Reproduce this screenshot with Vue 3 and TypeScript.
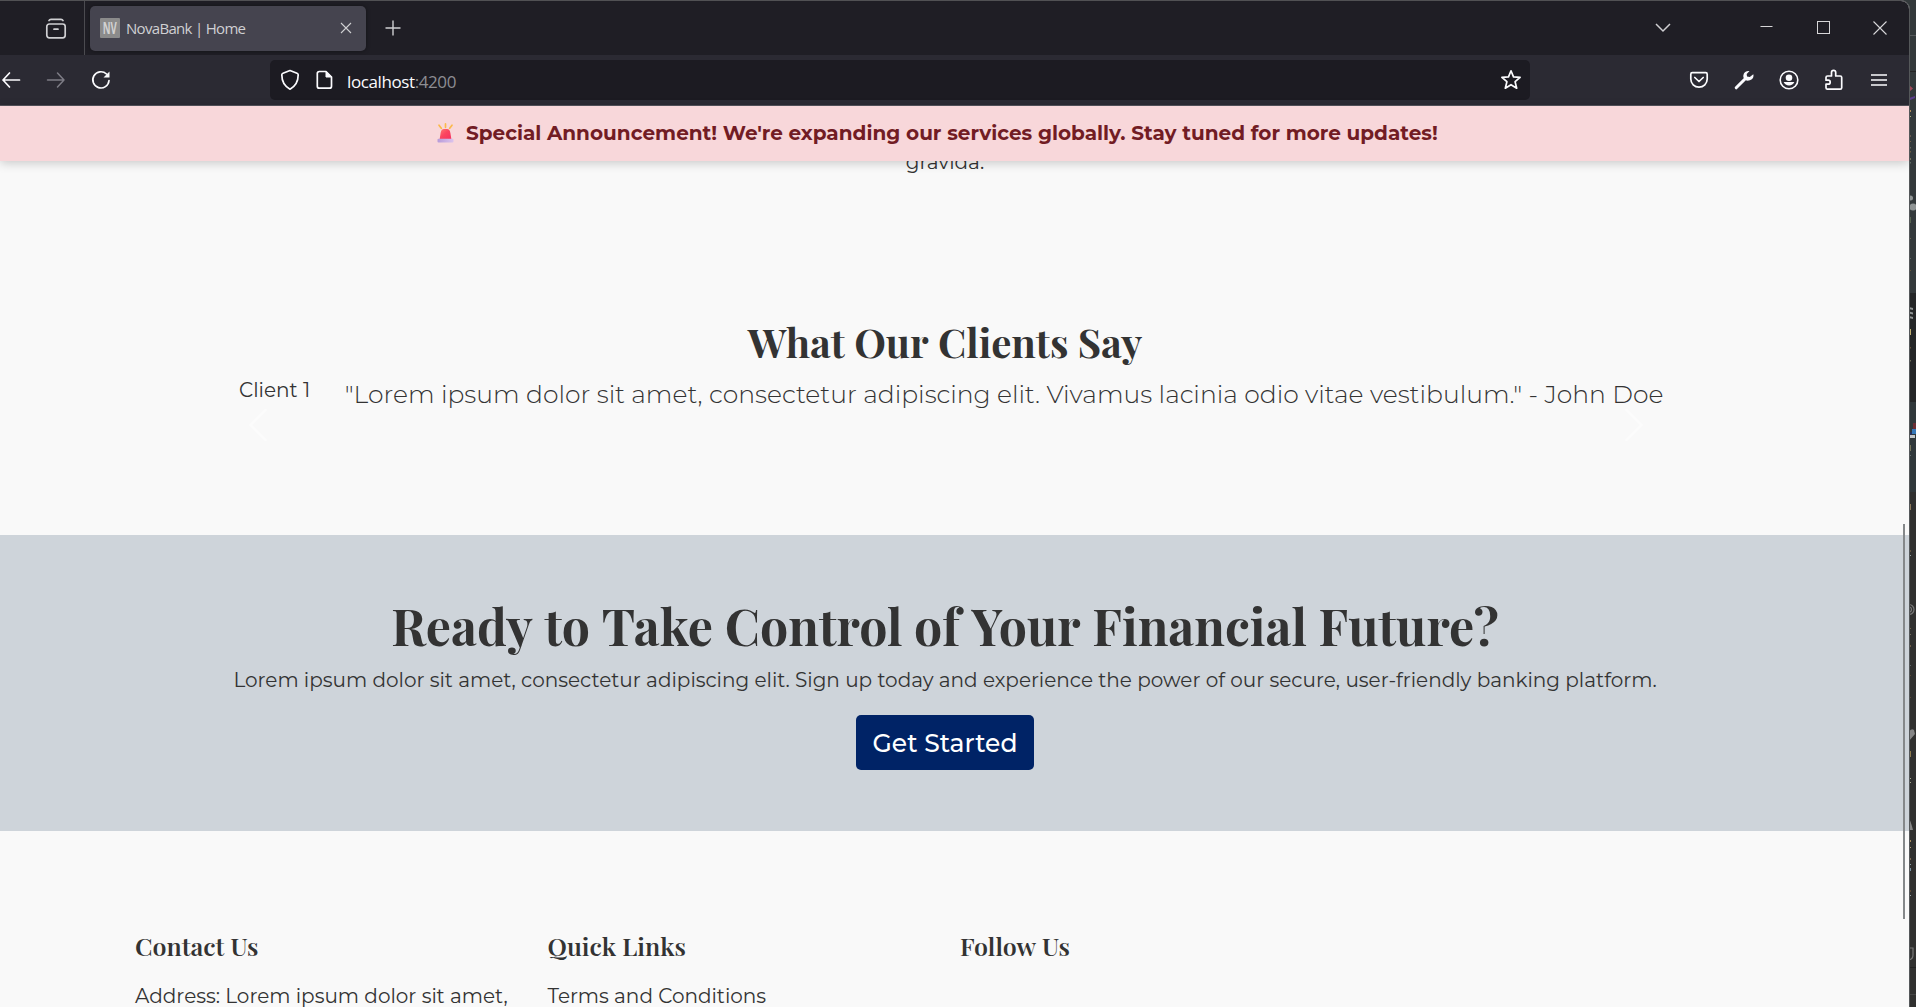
<script setup lang="ts">
import { h } from 'vue'

interface Mark { y: number; h: number; w: number; c: string }

// Sets every word as its own box, so that no kerning is applied across spaces.
const Words = (props: { text: string }) =>
  props.text.split(' ').flatMap((word, i) => (i ? [' ', h('span', { class: 'word' }, word)] : [h('span', { class: 'word' }, word)]))
Words.props = ['text']

// Slivers of the window that sits behind the browser on the right edge.
const marks: Mark[] = [
  { y: 110, h: 2, w: 2, c: '#b08a5a' }, { y: 116, h: 1, w: 2, c: '#a9b07a' },
  { y: 135, h: 2, w: 1.5, c: '#9a7a66' }, { y: 141, h: 1, w: 1.5, c: '#b08a5a' },
  { y: 147, h: 1.5, w: 1.5, c: '#9c9c86' }, { y: 151, h: 1.5, w: 1.5, c: '#a4834e' },
  { y: 158, h: 2, w: 1.5, c: '#b5a77c' }, { y: 162, h: 1.5, w: 1.5, c: '#8aa08e' },
  { y: 217, h: 6, w: 1.5, c: '#7d8f68' }, { y: 238, h: 1, w: 1.5, c: '#a08a60' },
  { y: 258, h: 1, w: 1.5, c: '#8c9690' }, { y: 270, h: 1, w: 1.5, c: '#94703f' },
  { y: 329, h: 6, w: 2, c: '#c0ae70' }, { y: 347, h: 1.5, w: 1.5, c: '#a47d4b' },
  { y: 360, h: 1.5, w: 1.5, c: '#b6b58a' }, { y: 445, h: 6, w: 2, c: '#77765c' },
  { y: 455, h: 1, w: 1.5, c: '#9ca7a8' }, { y: 504, h: 6, w: 2, c: '#8d7a5c' },
  { y: 550, h: 2, w: 1.5, c: '#8d7653' }, { y: 555, h: 1, w: 2, c: '#94a2a3' },
  { y: 628, h: 1, w: 1.5, c: '#b3925e' }, { y: 634, h: 1, w: 1.5, c: '#b0a988' },
  { y: 645, h: 2, w: 1.5, c: '#af8c62' }, { y: 665, h: 1, w: 1.5, c: '#8b9da2' },
  { y: 675, h: 1, w: 1.5, c: '#8a653f' }, { y: 697, h: 1, w: 1.5, c: '#8a653f' },
  { y: 751, h: 6, w: 2, c: '#8d7a4c' }, { y: 778, h: 1, w: 2, c: '#a3a68d' },
  { y: 782, h: 1, w: 2, c: '#a3a68d' }, { y: 840, h: 2, w: 2, c: '#a58b5f' },
  { y: 847, h: 1, w: 2, c: '#b3a178' }, { y: 858, h: 2, w: 2, c: '#7f6952' },
  { y: 864, h: 1, w: 2, c: '#8ba1a6' }, { y: 868, h: 3, w: 2, c: '#7c93a3' },
  { y: 890, h: 2, w: 1.5, c: '#8a653f' }, { y: 895, h: 1, w: 2, c: '#9aa6a8' },
]

const footer = [
  { title: 'Contact Us', line: 'Address: Lorem ipsum dolor sit amet,' },
  { title: 'Quick Links', line: 'Terms and Conditions' },
  { title: 'Follow Us', line: '' },
]
</script>

<template>
  <div class="desktop">
    <div class="window">
      <header class="tabs">
        <div class="recent">
          <svg width="22" height="22" viewBox="0 0 22 22" fill="none" stroke="#cfcfd2" stroke-width="1.7" stroke-linecap="round">
            <path d="M4 2.5C4.5 1.4 5 1.3 6 1.3h10c1 0 1.500.1 2 1.200" />
            <rect x="1.800" y="6" width="18.400" height="13.800" rx="2.500" />
            <path d="M9 11.200h4" />
          </svg>
        </div>
        <div class="tab">
          <span class="favicon"><b>NV</b></span>
          <span class="tab-title">NovaBank | Home</span>
          <svg class="tab-close" width="12" height="12" viewBox="0 0 12 12" fill="none" stroke="#cfcfd2" stroke-width="1.100"><path d="M1 1l10 10M11 1L1 11" /></svg>
        </div>
        <svg class="plus" width="16" height="16" viewBox="0 0 16 16" fill="none" stroke="#cfcfd2" stroke-width="1.400"><path d="M8 .5v15M.5 8h15" /></svg>
        <div class="controls">
          <svg class="down" width="16" height="10" viewBox="0 0 16 10" fill="none" stroke="#cfcfd2" stroke-width="1.500"><path d="M1 1l7 7 7-7" /></svg>
          <svg class="min" width="13" height="13" viewBox="0 0 13 13" fill="none" stroke="#d6d6d8"><path d="M.5 5.500h12" /></svg>
          <svg class="max" width="13" height="13" viewBox="0 0 13 13" fill="none" stroke="#d6d6d8"><rect x=".5" y=".5" width="12" height="12" /></svg>
          <svg width="14" height="14" viewBox="0 0 14 14" fill="none" stroke="#d6d6d8" stroke-width="1.100"><path d="M.5.5l13 13M13.500.5l-13 13" /></svg>
        </div>
      </header>

      <nav class="toolbar">
        <svg class="back" width="20" height="18" viewBox="0 0 20 18" fill="none" stroke="#fbfbfe" stroke-width="1.700" stroke-linecap="round" stroke-linejoin="round"><path d="M18.500 9H2M8.500 2L2 9l6.500 7" /></svg>
        <svg class="fwd" width="20" height="18" viewBox="0 0 20 18" fill="none" stroke="#7d7c85" stroke-width="1.500" stroke-linecap="round" stroke-linejoin="round"><path d="M1.500 9H18M11.500 2L18 9l-6.500 7" /></svg>
        <svg class="reload" width="20" height="20" viewBox="0 0 20 20" fill="none" stroke="#fbfbfe" stroke-width="1.700"><path d="M15.500 4A8.100 8.100 0 1 0 18 10.500" stroke-linecap="round" /><path d="M18.500 1.400v6h-6z" fill="#fbfbfe" stroke="none" /></svg>
        <div class="url">
          <svg class="shield" width="20" height="22" viewBox="0 0 20 22" fill="none" stroke="#fbfbfe" stroke-width="1.700" stroke-linejoin="round"><path d="M10 1.500L17 4.300c.8.300 1.200.7 1.200 1.500 0 6.500-2.200 11.200-8.200 14.400C4 17 1.800 12.300 1.800 5.800c0-.8.400-1.200 1.200-1.500z" /></svg>
          <svg class="page-icon" width="17" height="20" viewBox="0 0 17 20" fill="none" stroke="#fbfbfe" stroke-width="1.700" stroke-linejoin="round"><path d="M3.300 1.500H10l5.500 5.500v9.200a2 2 0 0 1-2 2H3.300a2 2 0 0 1-2-2V3.500a2 2 0 0 1 2-2z" /><path d="M10 1.500V7h5.500z" fill="#fbfbfe" stroke-width="1" /></svg>
          <span class="address">localhost<i>:4200</i></span>
          <svg class="star" width="22" height="22" viewBox="0 0 22 22" fill="none" stroke="#fbfbfe" stroke-width="1.700" stroke-linejoin="round"><path d="M11 1.800l2.500 6.100 6.600.5-5 4.300 1.600 6.500L11 15.700l-5.700 3.500 1.600-6.500-5-4.300 6.600-.5z" /></svg>
        </div>
        <div class="tools">
          <svg width="20" height="20" viewBox="0 0 20 20" fill="none" stroke="#fbfbfe" stroke-width="1.700" stroke-linecap="round" stroke-linejoin="round"><path d="M3.300 2.700h13.400c1 0 1.500.6 1.500 1.500V9a8.200 8.200 0 0 1-16.400 0V4.200c0-.9.500-1.500 1.500-1.500z" /><path d="M5.800 7.500L10 11.500l4.200-4" /></svg>
          <svg width="20" height="20" viewBox="0 0 20 20"><path d="M2.200 17.800L12 8" stroke="#fbfbfe" stroke-width="3" stroke-linecap="round" /><path d="M15.500 1a5.200 5.200 0 0 0-6 6.500 5.200 5.200 0 0 0 9.800-3.300L15.800 7 13 6.500 12.700 4z" fill="#fbfbfe" /></svg>
          <svg width="20" height="20" viewBox="0 0 20 20"><circle cx="10" cy="10" r="8.800" fill="none" stroke="#fbfbfe" stroke-width="1.600" /><circle cx="10" cy="7.700" r="3.300" fill="#fbfbfe" /><path d="M4.600 12h10.800a6 6 0 0 1-10.800 0z" fill="#fbfbfe" /></svg>
          <svg width="20" height="22" viewBox="0 0 20 22" fill="none" stroke="#fbfbfe" stroke-width="1.700" stroke-linejoin="round"><path d="M3.500 20.200a1.500 1.500 0 0 1-1.500-1.500v-3.500h2.200a2 2 0 0 0 0-4H2V8.500A1.500 1.500 0 0 1 3.500 7h4V3.500a2.100 2.100 0 0 1 4.200 0V7h4.500a1.500 1.500 0 0 1 1.500 1.500v10.200a1.500 1.500 0 0 1-1.500 1.500z" /></svg>
          <svg width="16" height="14" viewBox="0 0 16 14" stroke="#fbfbfe" stroke-width="1.400"><path d="M0 2h16M0 7h16M0 12h16" /></svg>
        </div>
      </nav>

      <div class="banner" role="alert">
        <svg class="siren" width="17" height="20" viewBox="0 0 17 20">
          <defs>
            <linearGradient id="dome" x1="0" y1="0" x2="1" y2="1"><stop offset="0" stop-color="#ff7a72" /><stop offset=".45" stop-color="#fb4560" /><stop offset="1" stop-color="#f5305e" /></linearGradient>
            <linearGradient id="base" x1="0" y1="0" x2="1" y2="0"><stop offset="0" stop-color="#b79bd9" /><stop offset="1" stop-color="#dcc3ec" /></linearGradient>
          </defs>
          <path d="M8.500.9v3.400M2 2.200l2.300 3.100M15 2.200l-2.300 3.100" stroke="#fbb94b" stroke-width="1.700" stroke-linecap="round" />
          <path d="M2.600 16.500l1-6.500C4 7.600 5.200 6 7 6h3c1.800 0 3 1.600 3.400 4l1 6.500z" fill="url(#dome)" />
          <rect x=".5" y="15.800" width="16" height="3.700" rx="1" fill="url(#base)" />
        </svg>
        <strong><Words text="Special Announcement! We're expanding our services globally. Stay tuned for more updates!" /></strong>
      </div>

      <main class="content">
        <p class="tail">gravida.</p>

        <section class="clients">
          <h2><Words text="What Our Clients Say" /></h2>
          <div class="carousel">
            <span class="alt">Client 1</span>
            <p class="quote"><Words text="&quot;Lorem ipsum dolor sit amet, consectetur adipiscing elit. Vivamus lacinia odio vitae vestibulum.&quot; - John Doe" /></p>
            <svg class="arrow prev" width="40" height="40" viewBox="0 0 16 16" fill="#fff"><path d="M11.354 1.646a.5.5 0 0 1 0 .708L5.707 8l5.647 5.646a.5.5 0 0 1-.708.708l-6-6a.5.5 0 0 1 0-.708l6-6a.5.5 0 0 1 .708 0z" /></svg>
            <svg class="arrow next" width="40" height="40" viewBox="0 0 16 16" fill="#fff"><path d="M4.646 1.646a.5.5 0 0 1 .708 0l6 6a.5.5 0 0 1 0 .708l-6 6a.5.5 0 0 1-.708-.708L10.293 8 4.646 2.354a.5.5 0 0 1 0-.708z" /></svg>
          </div>
        </section>

        <section class="cta">
          <h1><Words text="Ready to Take Control of Your Financial Future?" /></h1>
          <p><Words text="Lorem ipsum dolor sit amet, consectetur adipiscing elit. Sign up today and experience the power of our secure, user-friendly banking platform." /></p>
          <button type="button">Get Started</button>
        </section>

        <footer class="foot">
          <div v-for="col in footer" :key="col.title" class="col">
            <h5><Words :text="col.title" /></h5>
            <p><Words :text="col.line" /></p>
          </div>
        </footer>
      </main>
      <div class="scrollbar"></div>
    </div>

    <svg class="behind" width="7" height="1007" viewBox="0 0 7 1007">
      <rect width="7" height="1007" fill="#30302f" />
      <rect width="7" height="293" fill="#33393b" />
      <rect y="293" width="7" height="109" fill="#242627" />
      <rect y="402" width="7" height="90" fill="#30383b" />
      <rect y="35" width="7" height="1" fill="#55595b" />
      <rect y="71" width="7" height="1" fill="#242424" />
      <path d="M0 85l4 3.500L0 92z" fill="#a04a5a" />
      <path d="M0 98l6-2v2l-6 2.500z" fill="#5b3d8c" />
      <g fill="#8f9494">
        <circle cx="1.500" cy="198" r="2.500" /><circle cx="4" cy="207" r="3.500" />
        <path d="M0 307l4 1v2l-4-1zM0 311.500l4 1v2l-4-1zM0 316l4 1v2l-4-1z" />
      </g>
      <rect x="0" y="432" width="3" height="3" fill="#27315f" /><rect x="3" y="429" width="4" height="5" fill="#3577b8" />
      <rect x="4" y="423" width="3" height="6" fill="#6b2e34" /><rect x="0" y="435" width="6" height="3" fill="#c3c7c9" />
      <g fill="none" stroke="#777" stroke-width="1.200">
        <path d="M0 604.500a5 5 0 0 1 0 10M0 607a2.500 2.500 0 0 1 0 5" />
        <path d="M0 948h4v7q0 4-4 5" />
      </g>
      <path d="M0 732q2-4 5-2l1 4-6 7z M0 818q2 4 4 12H0z" fill="#858585" />
      <rect y="967" width="7" height="1" fill="#222" /><rect y="994" width="7" height="1" fill="#454545" />
      <rect v-for="m in marks" :key="m.y" x="0" :y="m.y" :width="m.w" :height="m.h" :fill="m.c" />
    </svg>
  </div>
</template>

<style>
body { margin: 0; overflow: hidden; }
.word { display: inline-block; }
</style>

<style scoped>
* { box-sizing: border-box; }
h1, h2, h5, p { margin: 0; }
svg { flex: none; display: block; }
.desktop { display: flex; width: 1916px; height: 1007px; overflow: hidden; background: #33393b; }
.window { position: relative; z-index: 1; display: flex; flex-direction: column; width: 1910px; height: 1007px; flex: none; overflow: hidden; border-top: 1px solid #515154; border-right: 1px solid #55585a; border-top-right-radius: 9px; background: #f9f9f9; }
.behind { margin-left: -1px; }

.tabs { display: flex; align-items: center; height: 54px; flex: none; background: #1f1e25; }
.recent { width: 85px; height: 54px; padding: 17px 0 0 45px; border-right: 1px solid #4b4b50; }
.tab { display: flex; align-items: center; width: 276px; height: 45px; margin-left: 5px; padding: 0 14px 0 10px; border-radius: 5px; background: #45444f; box-shadow: 0 0 4px rgba(0, 0, 0, .4); }
.favicon { display: flex; align-items: center; justify-content: center; width: 20px; height: 20px; border-radius: 1px; background: #8b8b8b; color: #d2d2d2; }
.favicon b { font: 700 16px/20px "Open Sans", sans-serif; transform: scaleX(.6); }
.tab-title { flex: 1; margin-left: 6px; font: 400 15px/20px "Open Sans", sans-serif; letter-spacing: -.69px; color: #d0d0d3; }
.tab-close { margin-bottom: 1px; }
.plus { margin-left: 19px; }
.controls { display: flex; align-items: center; margin: 0 0 1px auto; padding-right: 22px; }
.down { margin-right: 89px; }
.min { margin-right: 44px; }
.max { margin-right: 43px; }

.toolbar { display: flex; align-items: center; height: 51px; flex: none; border-bottom: 1px solid #55545c; background: #2b2a33; }
.back { margin-left: 1px; }
.fwd { margin-left: 25px; }
.reload { margin-left: 25px; }
.url { display: flex; align-items: center; width: 1260px; height: 40px; margin-left: 159px; padding: 0 8px 0 10px; border-radius: 5px; background: #1c1b22; }
.page-icon { margin-left: 16px; }
.address { flex: 1; margin-left: 14px; padding-top: 3px; font: 400 17px/24px "Open Sans", sans-serif; letter-spacing: -.4px; color: #fbfbfe; }
.address i { font-style: normal; color: #8d8d92; }
.tools { display: grid; grid-template-columns: repeat(5, 45px); place-items: center; margin-left: 146px; }

.banner { position: relative; z-index: 2; display: flex; align-items: center; height: 55px; flex: none; margin-bottom: -14px; padding: 0 0 1px 437px; background: #f8d7da; box-shadow: 0 2px 10px rgba(0, 0, 0, .2); color: #721c24; }
.banner strong { margin-left: 12px; font: 700 20px/30px Montserrat, Inter, sans-serif; white-space: nowrap; }

.content { width: 1909px; color: #333; font: 400 20px/30px Montserrat, Inter, sans-serif; }
.tail { padding-right: 19px; text-align: center; }
.clients { padding: 141.400px 19px 60px 0; text-align: center; }
h1, h2, h5 { font-family: "Playfair Display", "Liberation Serif", serif; white-space: nowrap; }
h2 { font-size: 40px; line-height: 48px; font-weight: 700; }
.carousel { position: relative; display: flex; gap: 34.500px; height: 99.600px; margin-top: 9px; padding-left: 239px; white-space: nowrap; }
.quote { padding-top: 1px; font-size: 25px; line-height: 37.500px; font-weight: 300; }
.arrow { position: absolute; top: 30px; opacity: .5; }
.prev { left: 237.500px; }
.next { left: 1613.500px; }
.cta { display: flex; flex-direction: column; align-items: center; height: 295.600px; padding: 61px 19px 59px 0; background: #ced4da; }
h1 { font-size: 50px; line-height: 60px; font-weight: 700; }
.cta p { margin-top: 9px; white-space: nowrap; }
button { width: 178px; height: 55px; margin-top: 20px; padding: 2px 0 0; border: 0; border-radius: 5px; background: #002366; color: #fff; font: 500 25px/37.500px Montserrat, Inter, sans-serif; }
.foot { display: flex; padding: 100px 0 0 135px; }
.col { width: 412.500px; white-space: nowrap; }
h5 { font-size: 25px; line-height: 30px; font-weight: 600; }
.col p { margin-top: 20px; }
.scrollbar { position: absolute; top: 523px; left: 1903px; width: 2px; height: 395px; background: #85888a; z-index: 3; }
</style>
